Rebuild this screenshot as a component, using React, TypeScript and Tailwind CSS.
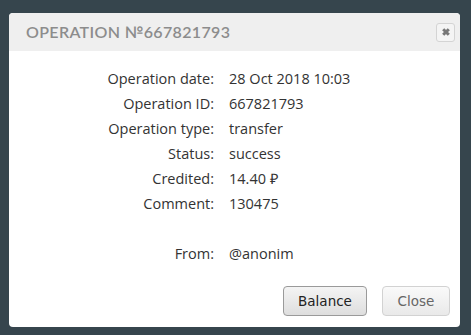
const rows: [string, string][] = [
  ["Operation date:", "28 Oct 2018 10:03"],
  ["Operation ID:", "667821793"],
  ["Operation type:", "transfer"],
  ["Status:", "success"],
  ["Credited:", "14.40 ₽"],
  ["Comment:", "130475"],
  ["", ""],
  ["From:", "@anonim"],
];

export default function App() {
  return (
    <div className="h-[335px] w-[471px] bg-[#36454d] pl-[9px] pt-[13px]">
      <div className="flex h-[314px] w-[451px] flex-col overflow-hidden rounded-[4px] bg-white">
        <div className="flex h-[38px] items-center justify-between bg-[#efefef] pl-[17px] pr-[5px]">
          <h2 className="font-['Lato',sans-serif] text-[16px] font-semibold tracking-[0.35px] text-[#8c8c8c]">
            OPERATION №667821793
          </h2>
          <button className="flex h-[19px] w-[19px] items-center justify-center rounded-[3px] border border-[#d4d4d4] bg-[#f4f4f4]">
            <svg width="10" height="10" viewBox="0 0 10 10">
              <path d="M2.2 2.2L7.8 7.8M7.8 2.2L2.2 7.8" stroke="#777" strokeWidth="3" strokeLinecap="butt" />
            </svg>
          </button>
        </div>
        <div className="grid grid-cols-[205px_1fr] gap-x-[15px] pt-[15px] font-['Open_Sans',sans-serif] text-[14.5px] text-[#333]">
          {rows.map(([k, v], i) => (
            <div key={i} className="contents">
              <div className="h-[25px] text-right leading-[25px]">{k}</div>
              <div className="h-[25px] leading-[25px]">{v}</div>
            </div>
          ))}
        </div>
        <div className="mt-auto flex justify-end gap-[15px] pb-[11px] pr-[10px] font-['DejaVu_Sans',sans-serif] text-[13.5px]">
          <button className="h-[30px] w-[84px] rounded-[4px] border border-[#9a9a9a] bg-gradient-to-b from-[#f4f4f4] to-[#dedede] text-[#222]">
            Balance
          </button>
          <button className="h-[30px] w-[68px] rounded-[4px] border border-[#d2d2d2] bg-gradient-to-b from-[#fafafa] to-[#e9e9e9] text-[#666]">
            Close
          </button>
        </div>
      </div>
    </div>
  );
}
